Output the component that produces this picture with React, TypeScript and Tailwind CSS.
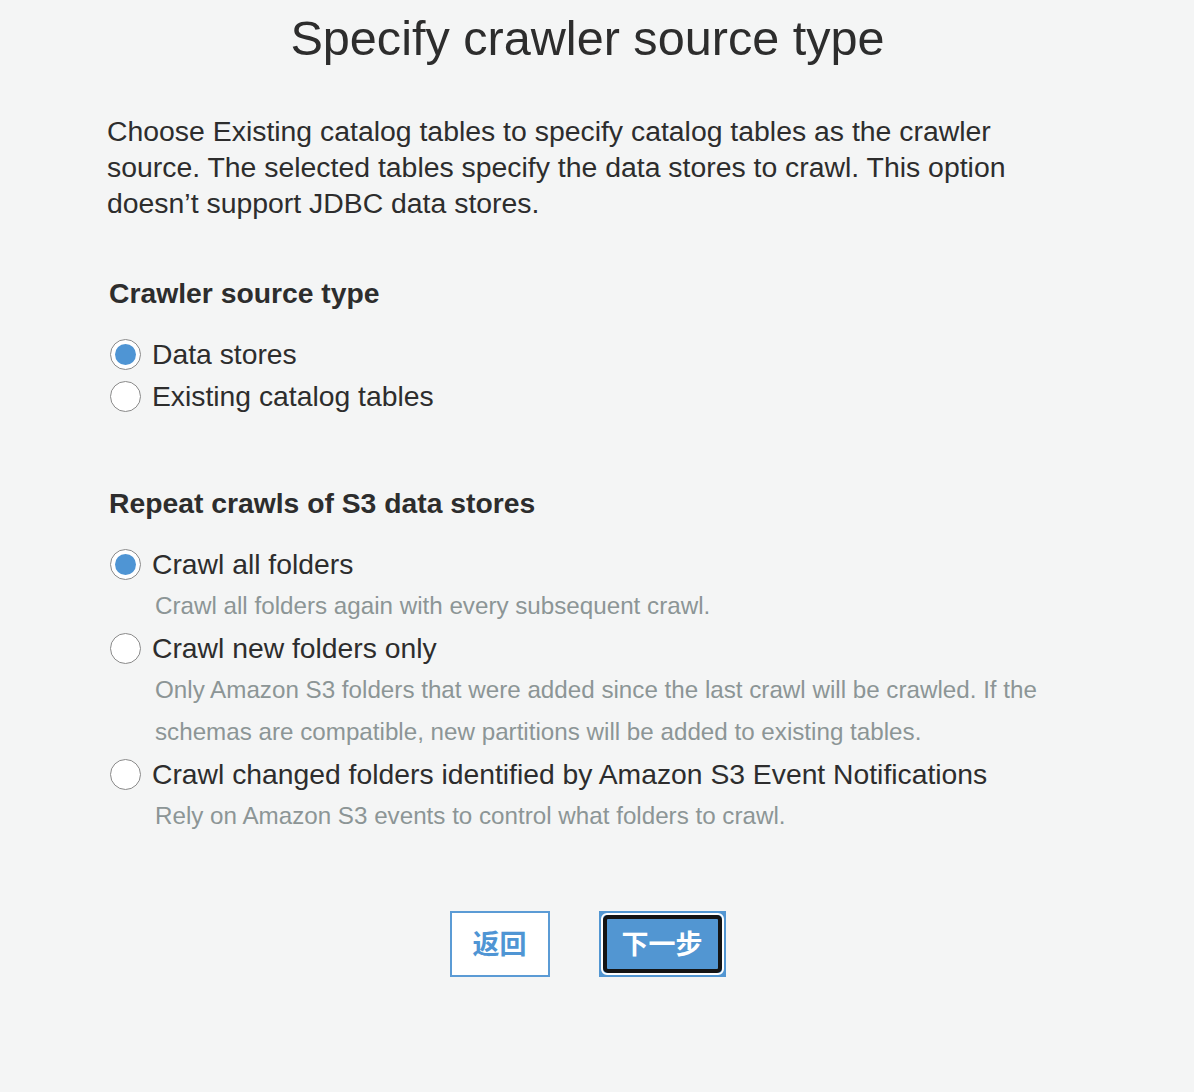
const font = { fontFamily: '"Liberation Sans", Arial, "Noto Sans CJK SC", sans-serif' }

interface RadioProps {
  checked?: boolean
  label: string
}

function Radio({ checked, label }: RadioProps) {
  return (
    <label className="flex items-center h-[42px] text-[28.3px] text-[#2d2d2d]">
      <span className="w-[31px] h-[31px] rounded-full border-[1.5px] border-[#8a8a8a] bg-white flex items-center justify-center shrink-0">
        {checked && <span className="w-[21px] h-[21px] rounded-full bg-[#4f95d4]" />}
      </span>
      <span className="ml-[11px]">{label}</span>
    </label>
  )
}

function Hint({ children }: { children: React.ReactNode }) {
  return <p className="pl-[45px] max-w-[960px] text-[24.2px] leading-[42px] text-[#8c9596]">{children}</p>
}

export default function App() {
  return (
    <div className="min-h-[1092px] bg-[#f4f5f5]" style={font}>
      <div className="w-[1175px] pt-[9px]">
        <h1 className="text-center text-[48.6px] leading-[58px] text-[#2d2d2d]">Specify crawler source type</h1>

        <div className="pl-[107px] pt-[46px]">
          <p className="w-[930px] text-[28.4px] leading-[36px] text-[#2d2d2d]">
            Choose Existing catalog tables to specify catalog tables as the crawler source. The selected tables specify the data stores to crawl. This option doesn’t support JDBC data stores.
          </p>

          {/* Crawler source type */}
          <h2 className="mt-[54px] pl-[2px] text-[28.3px] leading-[36px] font-bold text-[#2d2d2d]">Crawler source type</h2>
          <div className="mt-[22px] pl-[3px]">
            <Radio checked label="Data stores" />
            <Radio label="Existing catalog tables" />
          </div>

          {/* Repeat crawls */}
          <h2 className="mt-[68px] pl-[2px] text-[28.3px] leading-[36px] font-bold text-[#2d2d2d]">Repeat crawls of S3 data stores</h2>
          <div className="mt-[22px] pl-[3px]">
            <Radio checked label="Crawl all folders" />
            <Hint>Crawl all folders again with every subsequent crawl.</Hint>
            <Radio label="Crawl new folders only" />
            <Hint>
              Only Amazon S3 folders that were added since the last crawl will be crawled. If the schemas are compatible, new partitions will be added to existing tables.
            </Hint>
            <Radio label="Crawl changed folders identified by Amazon S3 Event Notifications" />
            <Hint>Rely on Amazon S3 events to control what folders to crawl.</Hint>
          </div>
        </div>

        {/* Buttons */}
        <div className="mt-[74px] flex justify-center gap-[49px]">
          <button className="w-[100px] h-[66px] pt-[3px] bg-white border-2 border-[#5b9bd5] text-[#4f95d4] text-[27px] font-bold">
            返回
          </button>
          <button className="w-[127px] h-[66px] bg-[#5296d2] p-[2px]">
            <span className="block h-full rounded-[6px] border-2 border-white">
              <span className="flex h-full pt-[3px] items-center justify-center rounded-[5px] border-4 border-[#141414] text-white text-[27px] font-bold">
                下一步
              </span>
            </span>
          </button>
        </div>
      </div>
    </div>
  )
}
